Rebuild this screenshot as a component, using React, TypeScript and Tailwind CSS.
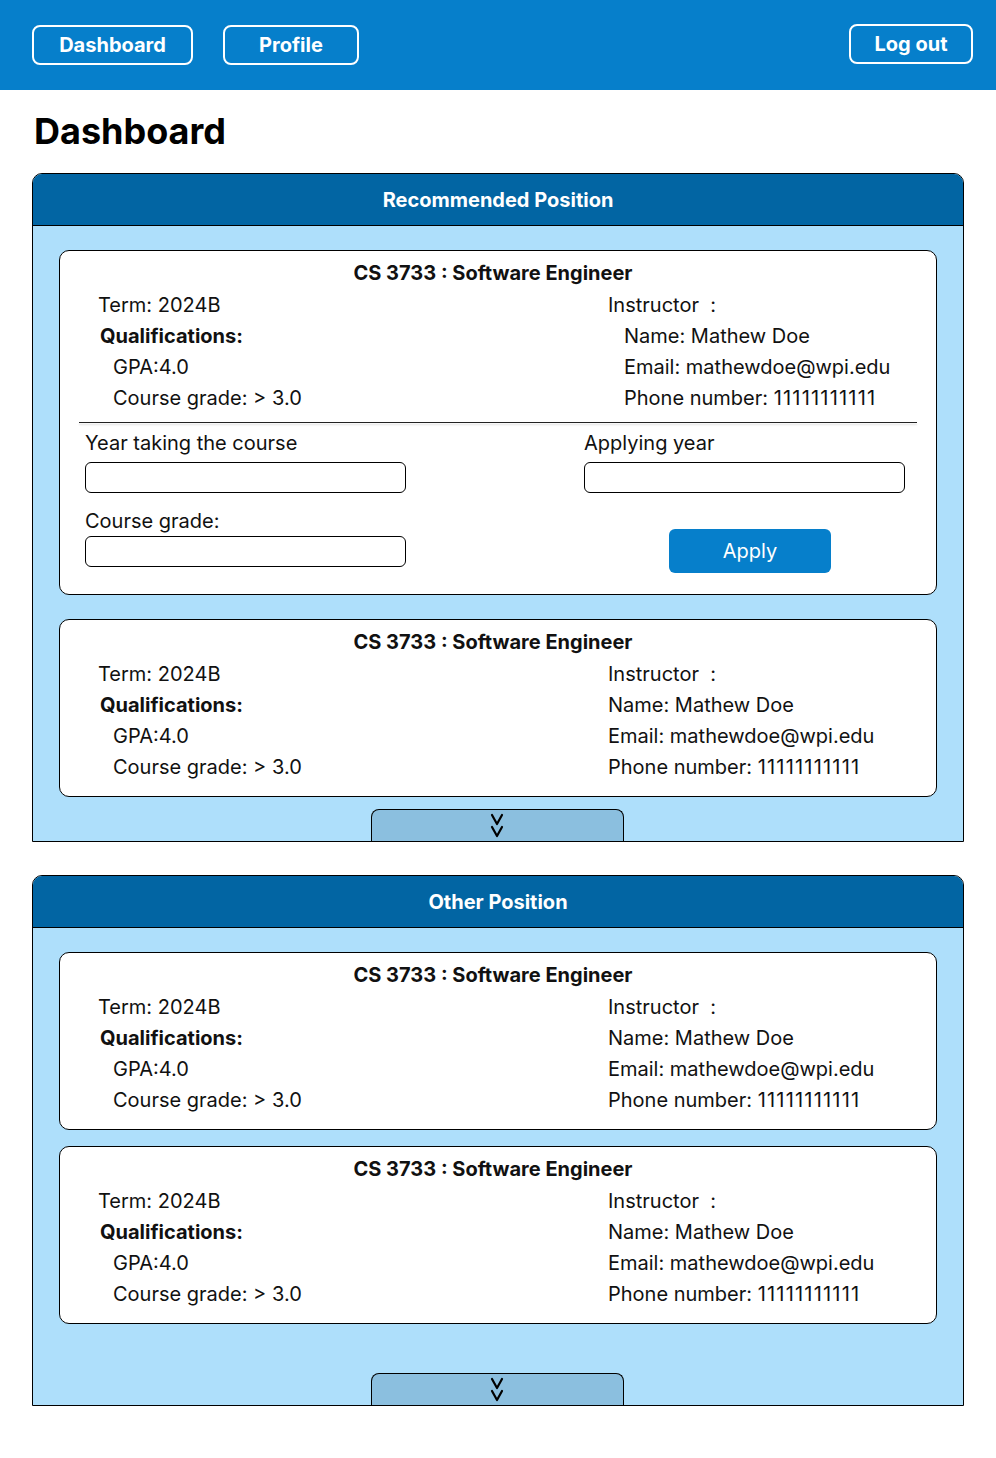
import React from "react";

const font = { fontFamily: "Inter, 'Noto Sans', sans-serif" };

function Chevrons() {
  return (
    <svg width="14" height="26" viewBox="0 0 14 26" fill="none" stroke="black" strokeWidth="2.2" strokeLinecap="round" strokeLinejoin="round">
      <path d="M2 3 L7 12 L12 3" />
      <path d="M2 15 L7 24 L12 15" />
    </svg>
  );
}

function Tab() {
  return (
    <div className="flex justify-center">
      <div className="ml-[-2px] w-[253px] h-[32px] bg-[#8bbfdf] border border-black border-b-0 rounded-t-[8px] flex items-start justify-center pt-[2px]">
        <Chevrons />
      </div>
    </div>
  );
}

function InfoRows({ indentRight }: { indentRight: boolean }) {
  const row = "h-[31px] flex items-center whitespace-nowrap";
  const sub = indentRight ? " pl-[16px]" : "";
  return (
    <div className="grid grid-cols-[510px_1fr] pl-[38px] text-[20px] text-[#111]">
      <div>
        <div className={row}>Term: 2024B</div>
        <div className={row + " font-bold pl-[2px]"}>Qualifications:</div>
        <div className={row + " pl-[15px]"}>GPA:4.0</div>
        <div className={row + " pl-[15px]"}>Course grade: &gt; 3.0</div>
      </div>
      <div>
        <div className={row}>Instructor&nbsp;&nbsp;:</div>
        <div className={row + sub}>Name: Mathew Doe</div>
        <div className={row + sub}>Email: mathewdoe@wpi.edu</div>
        <div className={row + sub}>
          Phone number:&nbsp;<span className="tracking-[1.2px]">11111111111</span>
        </div>
      </div>
    </div>
  );
}

function CardTitle() {
  return (
    <div className="h-[26px] flex items-center justify-center pr-[10px] text-[20px] font-bold text-[#111]">
      CS 3733 : Software Engineer
    </div>
  );
}

function Card() {
  return (
    <div className="bg-white border border-black rounded-[10px] pt-[9px] pb-[14px]">
      <CardTitle />
      <div className="mt-[3px]">
        <InfoRows indentRight={false} />
      </div>
    </div>
  );
}

function ApplyCard() {
  const input = "w-[321px] h-[31px] border border-black rounded-[6px] bg-white";
  const label = "h-[24px] flex items-center text-[20px] text-[#111] whitespace-nowrap";
  return (
    <div className="bg-white border border-black rounded-[10px] pt-[9px] pb-[21px]">
      <CardTitle />
      <div className="mt-[3px]">
        <InfoRows indentRight={true} />
      </div>
      <div className="mx-[19px] mt-[9px] h-px bg-[#222] shadow-[0_2px_2px_rgba(0,0,0,0.15)]" />
      <div className="grid grid-cols-[499px_1fr] pl-[25px] mt-[8px]">
        <div>
          <div className={label}>Year taking the course</div>
          <div className={input + " mt-[7px]"} />
          <div className={label + " mt-[16px]"}>Course grade:</div>
          <div className={input + " mt-[3px]"} />
        </div>
        <div>
          <div className={label}>Applying year</div>
          <div className={input + " mt-[7px]"} />
          <button className="ml-[85px] mt-[36px] w-[162px] h-[44px] rounded-[6px] bg-[#067fcb] text-white text-[20px] flex items-center justify-center">
            Apply
          </button>
        </div>
      </div>
    </div>
  );
}

function SectionHeader({ title }: { title: string }) {
  return (
    <div className="h-[52px] bg-[#0265a3] border-b border-black rounded-t-[9px] flex items-center justify-center text-white text-[20px] font-bold">
      {title}
    </div>
  );
}

export default function App() {
  return (
    <div style={font} className="min-h-[1458px] bg-white">
      <header className="h-[90px] bg-[#067fcb] flex items-start px-[32px]">
        <button className="mt-[25px] w-[161px] h-[40px] border-2 border-white rounded-[8px] text-white text-[20px] font-bold flex items-center justify-center">
          Dashboard
        </button>
        <button className="mt-[25px] ml-[30px] w-[136px] h-[40px] border-2 border-white rounded-[8px] text-white text-[20px] font-bold flex items-center justify-center">
          Profile
        </button>
        <div className="flex-1" />
        <button className="mt-[24px] mr-[-9px] w-[124px] h-[40px] border-2 border-white rounded-[8px] text-white text-[20px] font-bold flex items-center justify-center">
          Log out
        </button>
      </header>

      <h1 className="mt-[19px] ml-[34px] text-[36px] leading-[44px] font-bold text-black">Dashboard</h1>

      <section className="mt-[20px] mx-[32px] w-[932px] border border-black rounded-t-[10px] bg-[#aedffb]">
        <SectionHeader title="Recommended Position" />
        <div className="px-[26px] pt-[24px]">
          <ApplyCard />
          <div className="mt-[24px]">
            <Card />
          </div>
        </div>
        <div className="mt-[12px]">
          <Tab />
        </div>
      </section>

      <section className="mt-[33px] mx-[32px] w-[932px] border border-black rounded-t-[10px] bg-[#aedffb]">
        <SectionHeader title="Other Position" />
        <div className="px-[26px] pt-[24px]">
          <Card />
          <div className="mt-[16px]">
            <Card />
          </div>
        </div>
        <div className="mt-[49px]">
          <Tab />
        </div>
      </section>
    </div>
  );
}
